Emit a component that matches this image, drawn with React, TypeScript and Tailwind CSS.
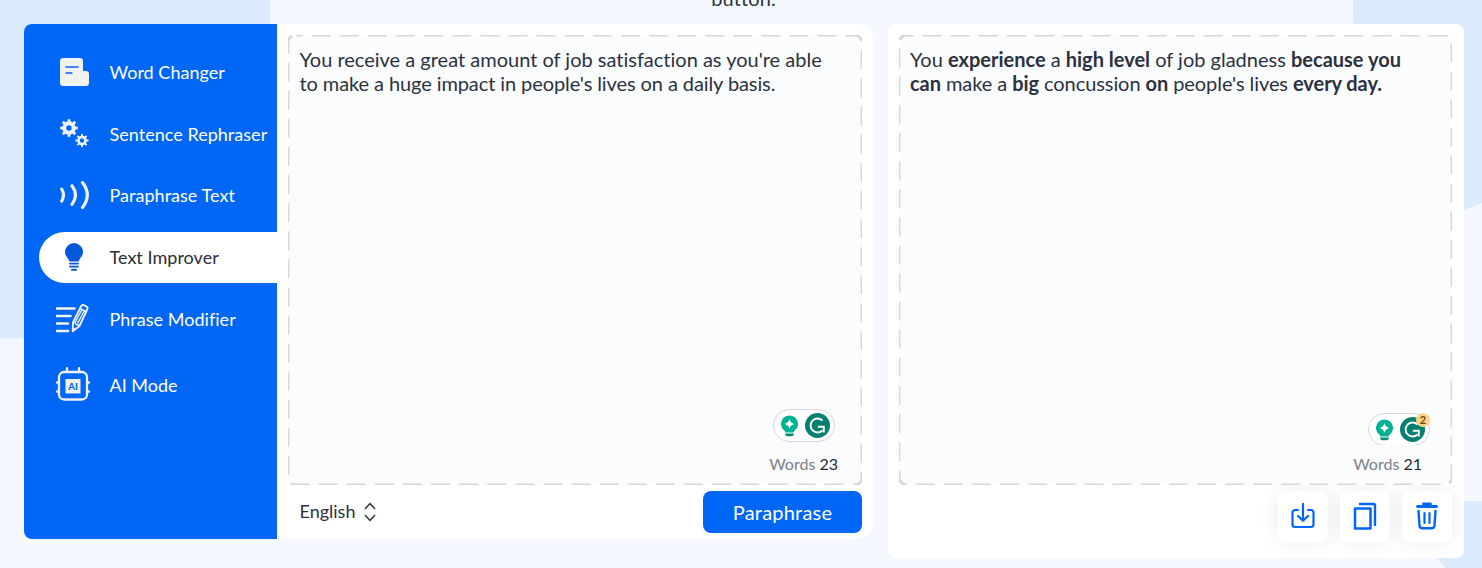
import React from 'react'

interface IconProps {
  className?: string
}

const DocumentIcon: React.FC<IconProps> = ({ className }) => (
  <svg className={className} width="29" height="28" viewBox="0 0 29 28">
    <path d="M3 0h17a3 3 0 0 1 3 3v10h3a3 3 0 0 1 3 3v9a3 3 0 0 1-3 3H3a3 3 0 0 1-3-3V3a3 3 0 0 1 3-3z" fill="#f1f1f2" />
    <path d="M6 9h12" stroke="#0066f5" strokeWidth="1.5" strokeLinecap="round" />
    <path d="M6 15h6" stroke="#0066f5" strokeWidth="1.3" strokeLinecap="round" />
  </svg>
)

const teeth = [0, 45, 90, 135, 180, 225, 270, 315]

const GearsIcon: React.FC<IconProps> = ({ className }) => (
  <svg className={className} width="29" height="28" viewBox="0 0 29 28" fill="none" stroke="#f1f1f2">
    <circle cx="9" cy="9" r="4.7" strokeWidth="4" />
    {teeth.map((angle) => (
      <path key={angle} d="M9 3V0.2" strokeWidth="2.8" transform={`rotate(${angle} 9 9)`} />
    ))}
    <circle cx="22" cy="21.5" r="3.5" strokeWidth="2.6" />
    {teeth.map((angle) => (
      <path key={angle} d="M22 17.5v-2.6" strokeWidth="1.9" transform={`rotate(${angle} 22 21.5)`} />
    ))}
  </svg>
)

const WavesIcon: React.FC<IconProps> = ({ className }) => (
  <svg className={className} width="29" height="28" viewBox="0 0 29 28" fill="none" stroke="#f1f1f2" strokeWidth="3.2" strokeLinecap="round">
    <path d="M1.8 8.2q3.4 5.8 0 11.8" />
    <path d="M12 4.8q7 9.2 0 18.6" />
    <path d="M22.5 1.6q9.6 12.4 0 24.8" />
  </svg>
)

const BulbIcon: React.FC<IconProps> = ({ className }) => (
  <svg className={className} width="18" height="28" viewBox="0 0 18 28">
    <path d="M9 0a9 9 0 0 1 9 9c0 4.2-3.6 5.8-4.3 9.6H4.3C3.6 14.8 0 13.2 0 9a9 9 0 0 1 9-9z" fill="#0558d9" />
    <path d="M4.8 20.6h8.4M4.8 23.6h8.4" stroke="#0558d9" strokeWidth="1.6" strokeLinecap="round" />
    <path d="M7 26.7h4" stroke="#0558d9" strokeWidth="2" strokeLinecap="round" />
  </svg>
)

const PencilLinesIcon: React.FC<IconProps> = ({ className }) => (
  <svg className={className} width="33" height="29" viewBox="0 0 33 29" fill="none" stroke="#f1f1f2">
    <path d="M1 4.5h17.5M1 12h13.5M1 19.5h11M1 27h11" strokeWidth="2.6" strokeLinecap="round" />
    <g strokeWidth="1.9" strokeLinejoin="round">
      <path d="M17 18.5 25 2.3q1.2-2 3.2-1l2 1q2 1 1 3L23.5 22l-6.8 5.2z" />
      <path d="M17 18.5l2.2.2.8 1.8 2 .2 1.5 1.3M24 4.5l7 3.5M19.5 18l6.7-13M21.5 19.500l7-13" strokeWidth="1.4" />
      <path d="M16.8 24.5l1.8 1.2" strokeWidth="2" />
    </g>
  </svg>
)

const ChipIcon: React.FC<IconProps> = ({ className }) => (
  <svg className={className} width="34" height="34" viewBox="0 0 34 34">
    <g fill="none" stroke="#f1f1f2" strokeWidth="2.3">
      <rect x="3" y="5" width="28" height="27.5" rx="5" />
      <path d="M11 5V1.2M23 5V1.2M3 15.5H1M3 24.5H1M31 15.5h2M31 24.5h2" strokeLinecap="round" />
    </g>
    <rect x="9.5" y="12" width="15" height="14.5" fill="#f1f1f2" />
    <text x="17" y="22.8" textAnchor="middle" fontSize="9.5" fontWeight="900" fill="#0066f5" fontFamily="Lato, sans-serif">AI</text>
  </svg>
)

const tools = [
  { label: 'Word Changer', icon: DocumentIcon },
  { label: 'Sentence Rephraser', icon: GearsIcon },
  { label: 'Paraphrase Text', icon: WavesIcon },
  { label: 'Text Improver', icon: BulbIcon, active: true },
  { label: 'Phrase Modifier', icon: PencilLinesIcon },
]

const Sidebar = () => (
  <nav className="flex w-[253px] shrink-0 flex-col gap-[10.6px] rounded-l-lg bg-[#0066f5] pt-[23.3px] pl-[15px]">
    {tools.map(({ label, icon: Icon, active }) => (
      <a
        key={label}
        className={
          active
            ? 'flex h-[51px] items-center rounded-l-full bg-white pl-[17px] text-[#2b2f3a]'
            : 'flex h-[51px] items-center pl-[17px] text-white'
        }
      >
        <span className="flex w-9 shrink-0 justify-center pb-0.5">
          <Icon className={Icon === PencilLinesIcon ? '-ml-1' : ''} />
        </span>
        <span className="ml-[17.5px] text-[18px] tracking-[0.03px] whitespace-nowrap">{label}</span>
      </a>
    ))}
    <a className="flex h-[60px] items-center pl-[17px] text-white">
      <ChipIcon className="mb-0.5 shrink-0" />
      <span className="ml-[19.5px] text-[18px] whitespace-nowrap">AI Mode</span>
    </a>
  </nav>
)

interface DashedBoxProps {
  children: React.ReactNode
}

// Rounded panel with a long-dash outline
const DashedBox: React.FC<DashedBoxProps> = ({ children }) => (
  <div className="relative h-[450px] rounded-lg bg-[#fbfcfe]">
    <svg className="pointer-events-none absolute inset-0 h-full w-full">
      <rect width="100%" height="100%" rx="8" fill="none" stroke="#d6d7d9" strokeWidth="2.8" strokeDasharray="19 9.1" strokeDashoffset="12.3" />
    </svg>
    <div className="flex h-full flex-col justify-between">{children}</div>
  </div>
)

interface GrammarBadgeProps {
  count?: number
}

const GrammarBadge: React.FC<GrammarBadgeProps> = ({ count }) => (
  <div className="relative h-[33px] w-[62px]">
    <div className={count ? 'h-[32px] overflow-hidden' : 'h-[33px]'}>
      <div className="flex h-[33px] items-center justify-between rounded-full border border-[#d5d6e3] bg-white pr-1 pl-[7px]">
        <svg width="17" height="22" viewBox="0 0 17 22">
          <path d="M8.5 0.5a8.5 8.5 0 0 1 5 15.3q-.8.7-.8 1.7H4.3q0-1-.8-1.7A8.5 8.5 0 0 1 8.5.5z" fill="#00b295" />
          <path d="M8.5 4q.9 4 4.9 4.9-4 .9-4.9 4.9-.9-4-4.9-4.9Q7.6 8 8.5 4z" fill="#fff" />
          <path d="M4.3 18.5h8.400v.8a2 2 0 0 1-2 2H6.300a2 2 0 0 1-2-2z" fill="#028c77" />
        </svg>
        <svg width="25" height="25" viewBox="0 0 25 25" fill="none">
          <circle cx="12.5" cy="12.5" r="12.5" fill="#03806f" />
          <path d="M17.5 7.5A7 7 0 1 0 17.5 17.5M12.8 13.8h6v5.6" stroke="#fff" strokeWidth="1.9" />
        </svg>
      </div>
    </div>
    {count && (
      <span className="absolute top-0 right-0 flex h-[14px] w-[14px] items-center justify-center rounded-full bg-[#fdd48a] text-[11px] font-bold text-[#6b4a12]">
        {count}
      </span>
    )}
  </div>
)

const WordCount = ({ words }: { words: number }) => (
  <p className="text-[16px] leading-6 text-[#7d8087]">
    Words <span className="text-[#212936]">{words}</span>
  </p>
)

const DownloadIcon = () => (
  <svg width="24" height="26" viewBox="0 0 24 26" fill="none" stroke="#0066f5" strokeWidth="2.2" strokeLinecap="round" strokeLinejoin="round">
    <path d="M7 7H4a2.500 2.500 0 0 0-2.500 2.500v12A2.500 2.500 0 0 0 4 24h16a2.500 2.500 0 0 0 2.500-2.500v-12A2.500 2.500 0 0 0 20 7h-3" />
    <path d="M12 1v16.5M7 13l5 4.8 5-4.8" />
  </svg>
)

const CopyIcon = () => (
  <svg width="24" height="28" viewBox="0 0 24 28" fill="none" stroke="#0066f5" strokeLinecap="round" strokeLinejoin="round">
    <rect x="2" y="6.5" width="15.5" height="20" strokeWidth="2.5" />
    <path d="M7 2h13.5a1.5 1.5 0 0 1 1.5 1.5V23" strokeWidth="2.4" />
  </svg>
)

const TrashIcon = () => (
  <svg width="22" height="28" viewBox="0 0 22 28" fill="none" stroke="#0066f5" strokeLinecap="round">
    <path d="M1.5 4.5h19M7.5 2h7" strokeWidth="2.8" />
    <path d="M2.500 9l1 14.500a3 3 0 0 0 3 2.800h9a3 3 0 0 0 3-2.800l1-14.500" strokeWidth="2.4" />
    <path d="M8.5 11v10M13.5 11v10" strokeWidth="2.2" />
  </svg>
)

const actions = [
  { name: 'Download', icon: DownloadIcon },
  { name: 'Copy', icon: CopyIcon },
  { name: 'Delete', icon: TrashIcon },
]

const App: React.FC = () => {
  return (
    <div className="relative h-[568px] w-full overflow-hidden bg-[#f5f9ff] font-[Lato,sans-serif] text-[#2b323e]">
      {/* Background shapes */}
      <svg className="absolute inset-0" width="1482" height="568" fill="#dceafe">
        <path d="M0 0h270v338.5H0zM1353 0h129v203l-128 52zM1400 501h82v67h-36l-46-46z" />
      </svg>

      <div className="relative">
        <div className="flex h-6 items-end justify-center">
          <p className="h-[38px] pl-[5px] text-[20px] leading-6 tracking-[0.1px]">button.</p>
        </div>

        <div className="flex items-start gap-[15px] pr-[18px] pl-6">
          {/* Input */}
          <section className="flex h-[515px] w-[849px] shrink-0 rounded-l-lg rounded-r-2xl bg-white">
            <Sidebar />
            <div className="flex-1 px-[11px] pt-[11px]">
              <DashedBox>
                <p className="pt-3 pl-[11.5px] text-[20px] leading-6 whitespace-nowrap">
                  <span className="[font-variant-ligatures:none]">You receive a great amount of job satisfaction as you're able</span>
                  <br />
                  <span className="tracking-[-0.09px]">to make a huge impact in people's lives on a daily basis.</span>
                </p>
                <div className="flex flex-col items-end pr-6 pb-[9px]">
                  <div className="mr-[3px] mb-[10px]">
                    <GrammarBadge />
                  </div>
                  <WordCount words={23} />
                </div>
              </DashedBox>
              <div className="mt-1.5 flex h-[42px] items-center justify-between pl-[11.5px]">
                <div className="flex items-center gap-[9px] pb-0.5 text-[18px]">
                  <span>English</span>
                  <svg className="mt-0.5" width="12" height="20" viewBox="0 0 12 20" fill="none" stroke="#2b323e" strokeWidth="1.5">
                    <path d="M1 7l5-5.5L11 7M1 13l5 5.5 5-5.5" />
                  </svg>
                </div>
                <button className="h-[42px] w-[159px] rounded-lg bg-[#0066f5] text-[20px] tracking-[0.2px] text-white">Paraphrase</button>
              </div>
            </div>
          </section>

          {/* Result */}
          <section className="h-[534px] w-[576px] shrink-0 rounded-lg bg-white pt-[11px] pr-3 pl-[11px]">
            <DashedBox>
              <p className="pt-3 pl-[11px] text-[20px] leading-6 whitespace-nowrap">
                You <b>experience</b> a <b>high level</b> of job gladness <b>because you</b>
                <br />
                <span className="tracking-[-0.07px]">
                  <b>can</b> make a <b>big</b> concussion <b>on</b> people's lives <b>every day.</b>
                </span>
              </p>
              <div className="flex flex-col items-end pr-[30px] pb-[9px]">
                <div className="-mr-2 mb-[6px]">
                  <GrammarBadge count={2} />
                </div>
                <WordCount words={21} />
              </div>
            </DashedBox>
            <div className="mt-1.5 flex justify-end gap-3">
              {actions.map(({ name, icon: Icon }) => (
                <button
                  key={name}
                  aria-label={name}
                  className="flex h-[51px] w-[50px] items-center justify-center rounded-lg bg-white pb-0.5 shadow-[0_0_20px_rgba(0,0,0,0.08)]"
                >
                  <Icon />
                </button>
              ))}
            </div>
          </section>
        </div>
      </div>
    </div>
  )
}

export default App
